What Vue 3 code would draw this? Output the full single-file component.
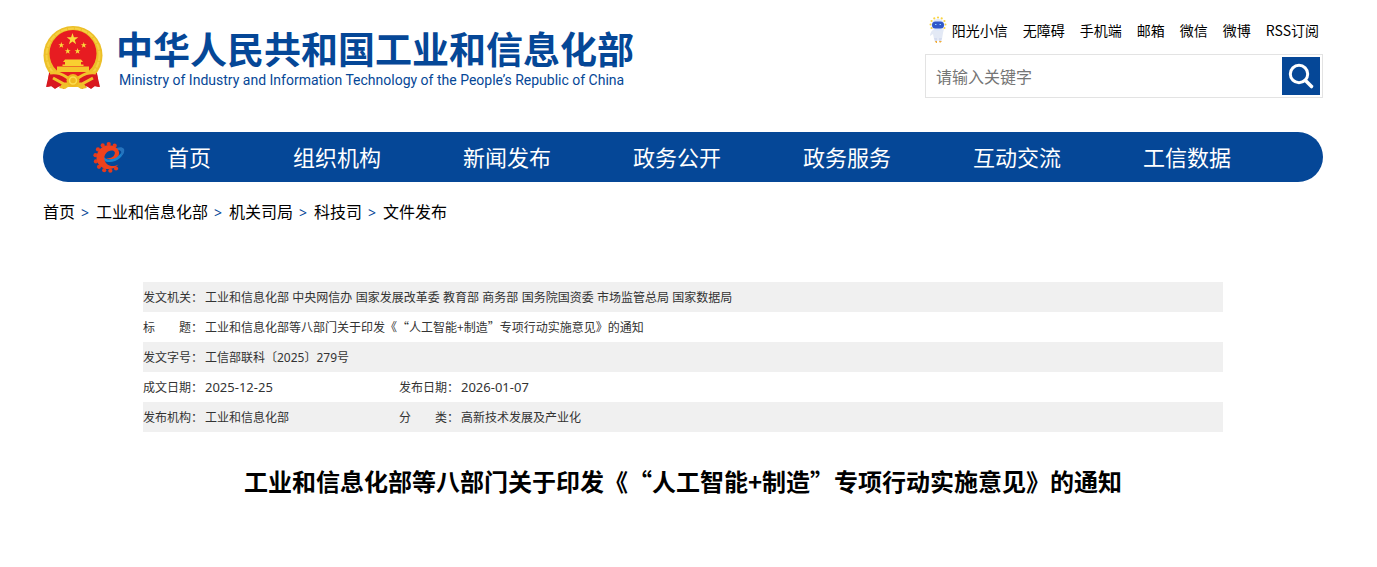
<script setup>
import { ref } from 'vue'

const keyword = ref('')
const tools = ['无障碍', '手机端', '邮箱', '微信', '微博', 'RSS订阅']
const menu = ['首页', '组织机构', '新闻发布', '政务公开', '政务服务', '互动交流', '工信数据']
const crumbs = ['首页', '工业和信息化部', '机关司局', '科技司', '文件发布']
const teeth = Array.from({ length: 10 }, (_, i) => {
  const a = ((-62 - i * 27) * Math.PI) / 180
  return { x: 15.5 + 13.2 * Math.cos(a), y: 16.5 + 13.4 * Math.sin(a) }
})
const rays = Array.from({ length: 9 }, (_, i) => {
  const a = ((150 + i * 30) * Math.PI) / 180
  return { x: 9 + 7.4 * Math.cos(a), y: 8.5 + 7 * Math.sin(a) }
})
</script>

<template>
  <div class="page" lang="zh-CN">
    <header class="header">
      <a class="brand" href="#">
        <svg class="emblem" viewBox="0 0 60 64" aria-hidden="true">
          <path d="M7 44 3 61l5-1 4 3 4-3 5 3 2-12Z" fill="#cf1620" />
          <path d="M53 44l4 17-5-1-4 3-4-3-5 3-2-12Z" fill="#cf1620" />
          <circle cx="30" cy="29.5" r="29.5" fill="#ecbf28" />
          <circle cx="30" cy="29" r="26.500" fill="none" stroke="#f6d042" stroke-width="2" stroke-dasharray="6 1" />
          <circle cx="30" cy="27.500" r="23.500" fill="#e71c21" />
          <path fill="#fada3c" d="m29.500 7 1.400 4.200h4.400l-3.500 2.700 1.300 4.300-3.600-2.600-3.600 2.600 1.300-4.300-3.500-2.700h4.400Z" />
          <g fill="#fada3c">
            <path d="m18.300 16 .8 2.200h2.200l-1.800 1.400.7 2.200-1.900-1.200-1.900 1.200.8-2.200-1.800-1.400h2.200Z" />
            <path d="m40.700 16 .8 2.200h2.200l-1.800 1.400.7 2.200-1.900-1.200-1.900 1.200.8-2.200-1.800-1.400h2.200Z" />
            <path d="m24.700 22 .8 2.200h2.200l-1.800 1.400.7 2.200-1.900-1.200-1.900 1.200.8-2.200-1.800-1.400h2.200Z" />
            <path d="m34.500 22 .8 2.200h2.200l-1.800 1.400.7 2.200-1.900-1.200-1.900 1.200.8-2.200-1.800-1.400h2.200Z" />
          </g>
          <path fill="#f9cf30" d="M22 33.500h16l2 2.500h-2v2.500h2.500v1.500h-21v-1.500H22V36h-2Z" />
          <path fill="#f5c52c" d="M14 40.500h32V46H14Z" />
          <path d="M6 47c8-2 14 0 18 3h12c4-3 10-5 18-3l2 14-5-1-4 2-4-2H17l-4 2-4-2-5 1Z" fill="#d9181f" />
          <path d="M7 47c8-1 12 1 18 5M53 47c-8-1-12 1-18 5M10 52l11 6h18l11-6" fill="none" stroke="#f2c22b" stroke-width="3" />
          <path d="M19 58h22l3 4-6 1-3-2H25l-3 2-6-1Z" fill="#efc12a" />
          <circle cx="30" cy="54.500" r="6.500" fill="#efb91e" />
          <circle cx="30" cy="54.500" r="3.500" fill="none" stroke="#fbdc4f" stroke-width="1.500" />
        </svg>
        <span class="brand-text">
          <span class="brand-cn">中华人民共和国工业和信息化部</span>
          <span class="brand-en">Ministry of Industry and Information Technology of the People’s Republic of China</span>
        </span>
      </a>

      <div class="side">
        <nav class="tools" aria-label="快捷入口">
          <a class="assistant" href="#">
            <svg viewBox="0 0 18 28" aria-hidden="true">
              <circle v-for="(r, i) in rays" :key="i" :cx="r.x" :cy="r.y" r="1.100" fill="#f8d343" />
              <path d="M4 14c-2 1-3 4-3 6l3-2 1 5c2 2 6 2 8 0l1-6 1-4-3 1Z" fill="#e3e9f5" />
              <path d="M5 22h3v4H6ZM10 22h3l-1 4h-2Z" fill="#d5dcef" />
              <path d="M6 25h2v2H7ZM10 25h3l-2 2Z" fill="#f2ad38" />
              <ellipse cx="9" cy="9" rx="6.500" ry="6" fill="#dde7fa" />
              <rect x="3" y="5.500" width="12" height="7" rx="3.500" fill="#3158c9" />
              <path d="M6 8.500h1.500M10.500 8.500H12" stroke="#8fd4ff" stroke-width="1.200" />
            </svg>
            <span>阳光小信</span>
          </a>
          <a v-for="t in tools" :key="t" href="#">{{ t }}</a>
        </nav>
        <form class="search" role="search" @submit.prevent>
          <input v-model="keyword" type="text" placeholder="请输入关键字" aria-label="请输入关键字" />
          <button type="submit" aria-label="搜索">
            <svg viewBox="0 0 38 38" aria-hidden="true">
              <g fill="none" stroke="#fff" stroke-linecap="round">
                <circle cx="17" cy="17" r="8.700" stroke-width="3" />
                <path d="m23.500 23.500 6 6" stroke-width="3.600" />
              </g>
            </svg>
          </button>
        </form>
      </div>
    </header>

    <nav class="menu" aria-label="主导航">
      <svg class="gear" viewBox="0 0 32 32" aria-hidden="true">
        <circle v-for="(t, i) in teeth" :key="i" :cx="t.x" :cy="t.y" r="2.100" fill="#e63a1c" />
        <path d="M31 8c1 7-8 14-16 13-4 0-5-3-4-5 2 3 6 3 10 1 5-2 8-5 10-9Z" fill="#1686d2" />
        <path d="M20 9c4-3 9-4 11-1 1 3-1 6-4 8 2-3 2-6-1-7-2 0-4 0-6 0Z" fill="#2673bd" />
        <path d="M24 7.500C19 2.500 9.500 3.500 5.500 10c-5 8 0 16.500 8 18 5 .5 9-1 12-4.500-7 3.500-13 .5-14-5-1-5 3-9 7-9 3 0 4 2 3 4-1 3-5 4-9 4 5 2 11 0 13-3 1-2 1-4.500-1.500-7Z" fill="#ef421d" />
      </svg>
      <ul>
        <li v-for="m in menu" :key="m"><a href="#">{{ m }}</a></li>
      </ul>
    </nav>

    <nav class="crumbs" aria-label="当前位置">
      <template v-for="(c, i) in crumbs" :key="c">
        <span v-if="i" class="sep">&gt;</span>
        <a href="#">{{ c }}</a>
      </template>
    </nav>

    <main class="article">
      <table>
        <colgroup>
          <col class="col-label" />
          <col class="col-value" />
          <col class="col-label" />
          <col />
        </colgroup>
        <tbody>
          <tr>
            <th scope="row">发文机关：</th>
            <td class="agencies" colspan="3">工业和信息化部 中央网信办 国家发展改革委 教育部 商务部 国务院国资委 市场监管总局 国家数据局</td>
          </tr>
          <tr>
            <th scope="row">标　　题：</th>
            <td colspan="3">工业和信息化部等八部门关于印发《“人工智能+制造”专项行动实施意见》的通知</td>
          </tr>
          <tr>
            <th scope="row">发文字号：</th>
            <td class="doc-no" colspan="3">工信部联科〔2025〕279号</td>
          </tr>
          <tr>
            <th scope="row">成文日期：</th>
            <td class="date">2025-12-25</td>
            <th scope="row">发布日期：</th>
            <td class="date">2026-01-07</td>
          </tr>
          <tr>
            <th scope="row">发布机构：</th>
            <td>工业和信息化部</td>
            <th scope="row">分　　类：</th>
            <td>高新技术发展及产业化</td>
          </tr>
        </tbody>
      </table>
      <h1>工业和信息化部等八部门关于印发《“人工智能+制造”专项行动实施意见》的通知</h1>
    </main>
  </div>
</template>

<style>
body {
  background: #fff;
}
</style>

<style scoped>
.page {
  box-sizing: border-box;
  max-width: 1291px;
  margin: 0 auto;
  padding-right: 11px;
  color: #000;
  font-family: "Noto Sans CJK SC", sans-serif;
  text-spacing-trim: space-all;
}
a {
  color: inherit;
  text-decoration: none;
}
.header {
  display: flex;
  justify-content: space-between;
  align-items: flex-start;
  height: 132px;
}
.brand {
  display: flex;
  gap: 13px;
  padding-top: 26px;
  color: #054797;
}
.emblem {
  width: 60px;
  height: 64px;
}
.brand-text {
  display: flex;
  flex-direction: column;
  white-space: nowrap;
}
.brand-cn {
  font-size: 37px;
  font-weight: 700;
  line-height: 44px;
}
.brand-en {
  padding-left: 3px;
  font-family: Roboto, sans-serif;
  font-size: 14px;
  line-height: 20px;
}
.side {
  width: 398px;
  padding-top: 16px;
}
.tools {
  display: flex;
  justify-content: flex-end;
  align-items: center;
  gap: 15px;
  height: 28px;
  padding-right: 4px;
  font-size: 14px;
  white-space: nowrap;
}
.assistant {
  display: flex;
  align-items: center;
  gap: 5px;
}
.assistant svg {
  width: 18px;
  height: 28px;
}
.search {
  display: flex;
  box-sizing: border-box;
  height: 44px;
  margin-top: 10px;
  padding: 2px;
  border: 1px solid #e3e3e3;
}
.search input {
  flex: 1;
  min-width: 0;
  padding: 0 8px;
  border: 0;
  outline: 0;
  background: none;
  font-family: inherit;
  font-size: 16px;
}
.search input::placeholder {
  color: #757575;
}
.search button {
  width: 38px;
  height: 38px;
  padding: 0;
  border: 0;
  background: #054797;
  cursor: pointer;
}
.search svg {
  display: block;
}
.menu {
  display: flex;
  align-items: center;
  gap: 42px;
  height: 50px;
  padding-left: 50px;
  border-radius: 25px;
  background: #054797;
  color: #fff;
}
.gear {
  width: 32px;
  height: 32px;
}
.menu ul {
  display: flex;
  gap: 82px;
  margin: 0;
  padding: 0 0 2px;
  list-style: none;
  font-size: 22px;
  line-height: 48px;
  white-space: nowrap;
}
.crumbs {
  display: flex;
  align-items: baseline;
  gap: 6px;
  padding-top: 17px;
  font-size: 16px;
  line-height: 24px;
}
.sep {
  width: 9px;
  color: #054797;
  font-family: "Noto Sans", sans-serif;
  font-size: 14px;
}
.article {
  padding: 57px 100px 0;
}
table {
  width: 100%;
  border-collapse: collapse;
  table-layout: fixed;
  color: #333;
  font-size: 12px;
}
.col-label {
  width: 62px;
}
.col-value {
  width: 194px;
}
tr {
  height: 30px;
}
tr:nth-child(odd) {
  background: #f0f0f0;
}
th,
td {
  padding: 0;
  font-weight: 400;
  line-height: 18px;
  text-align: left;
  white-space: nowrap;
}
.agencies,
.doc-no {
  padding-top: 2px;
}
.agencies {
  font-family: "Liberation Sans", "Noto Sans CJK SC", sans-serif;
}
.doc-no {
  font-family: "Noto Sans", "Noto Sans CJK SC", sans-serif;
}
.date {
  font-family: "Noto Sans", sans-serif;
  font-size: 13px;
}
h1 {
  margin: 31px 0 0;
  font-size: 24px;
  font-weight: 700;
  line-height: 36px;
  text-align: center;
  white-space: nowrap;
}
</style>
